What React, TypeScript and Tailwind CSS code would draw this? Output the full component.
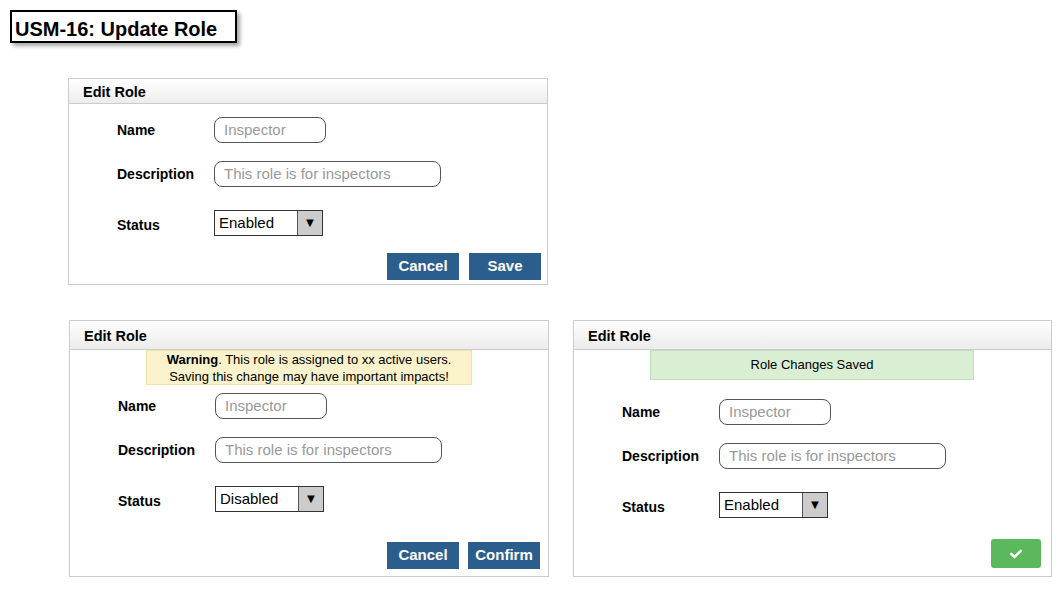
import { FaCheck } from 'react-icons/fa';

const FONT = { fontFamily: '"Liberation Sans", Arial, sans-serif' };

function TextBox({ placeholder, wide }: { placeholder: string; wide?: boolean }) {
    return (
        <div
            className={`h-[26px] ${wide ? 'w-[227px]' : 'w-[112px]'} rounded-[8px] border border-[#555] bg-white pl-[9px] text-[15px] leading-[24px] text-[#999]`}
        >
            {placeholder}
        </div>
    );
}

function SelectBox({ value }: { value: string }) {
    return (
        <div className="flex h-[26px] w-[109px] border border-[#333] bg-white">
            <div className="flex-1 pl-[4px] text-[15px] leading-[24px] text-black">{value}</div>
            <div className="flex w-[25px] items-center justify-center border-l border-[#555] bg-[#ccc] text-[13px] text-black">▼</div>
        </div>
    );
}

function FormRows({ status, firstGap, indent }: { status: string; firstGap: string; indent: string }) {
    const label = 'w-[97px] text-[14px] font-bold text-black';
    return (
        <div className={`${indent} ${firstGap}`}>
            <div className="flex items-center">
                <div className={label}>Name</div>
                <TextBox placeholder="Inspector" />
            </div>
            <div className="mt-[18px] flex items-center">
                <div className={label}>Description</div>
                <TextBox placeholder="This role is for inspectors" wide />
            </div>
            <div className="mt-[23px] flex items-center">
                <div className={`${label} pt-[5px]`}>Status</div>
                <SelectBox value={status} />
            </div>
        </div>
    );
}

function PanelHeader({ tall }: { tall?: boolean }) {
    return (
        <div
            className={`${tall ? 'h-[29px]' : 'h-[25px]'} flex items-center border-b border-[#ccc] bg-gradient-to-b from-white to-[#ececec] pl-[14px] pt-[3px] text-[14.5px] font-bold text-black`}
        >
            Edit Role
        </div>
    );
}

function BlueButton({ children }: { children: string }) {
    return (
        <button className="h-[27px] w-[72px] bg-[#2c5e8d] text-[15px] font-bold text-white">{children}</button>
    );
}

export default function App() {
    return (
        <div className="h-[594px] w-[1061px] bg-white" style={FONT}>
            <div className="pl-[10px] pt-[10px]">
                <div className="flex h-[33px] w-[227px] items-center border-2 border-black bg-white pl-[3px] pt-[5px] text-[20px] font-bold text-black shadow-[3px_3px_4px_rgba(0,0,0,0.35)]">
                    USM-16: Update Role
                </div>
            </div>

            <div className="ml-[68px] mt-[35px] flex h-[207px] w-[480px] flex-col border border-[#ccc]">
                <PanelHeader />
                <FormRows status="Enabled" firstGap="mt-[13px]" indent="pl-[48px]" />
                <div className="mt-auto mb-[4px] flex justify-end gap-[10px] pr-[6px]">
                    <BlueButton>Cancel</BlueButton>
                    <BlueButton>Save</BlueButton>
                </div>
            </div>

            <div className="ml-[69px] mt-[35px] flex gap-[24px]">
                <div className="flex h-[257px] w-[480px] flex-col border border-[#ccc]">
                    <PanelHeader tall />
                    <div className="ml-[76px] flex h-[35px] w-[326px] flex-col items-center justify-center border border-[#f0e2a8] bg-[#f9f2cb] text-[13px] leading-[17px] text-black">
                        <div>
                            <span className="font-bold">Warning</span>. This role is assigned to xx active users.
                        </div>
                        <div>Saving this change may have important impacts!</div>
                    </div>
                    <FormRows status="Disabled" firstGap="mt-[8px]" indent="pl-[48px]" />
                    <div className="mt-auto mb-[7px] flex justify-end gap-[9px] pr-[8px]">
                        <BlueButton>Cancel</BlueButton>
                        <BlueButton>Confirm</BlueButton>
                    </div>
                </div>

                <div className="flex h-[257px] w-[479px] flex-col border border-[#ccc]">
                    <PanelHeader tall />
                    <div className="ml-[76px] flex h-[30px] w-[324px] items-center justify-center border border-[#bfe0b4] bg-[#d9eed3] text-[13px] text-black">
                        Role Changes Saved
                    </div>
                    <FormRows status="Enabled" firstGap="mt-[19px]" indent="pl-[48px]" />
                    <div className="mt-auto mb-[8px] flex justify-end pr-[10px]">
                        <button className="flex h-[29px] w-[50px] items-center justify-center rounded-[3px] bg-[#5cb85c] text-white">
                            <FaCheck size={12} />
                        </button>
                    </div>
                </div>
            </div>
        </div>
    );
}
